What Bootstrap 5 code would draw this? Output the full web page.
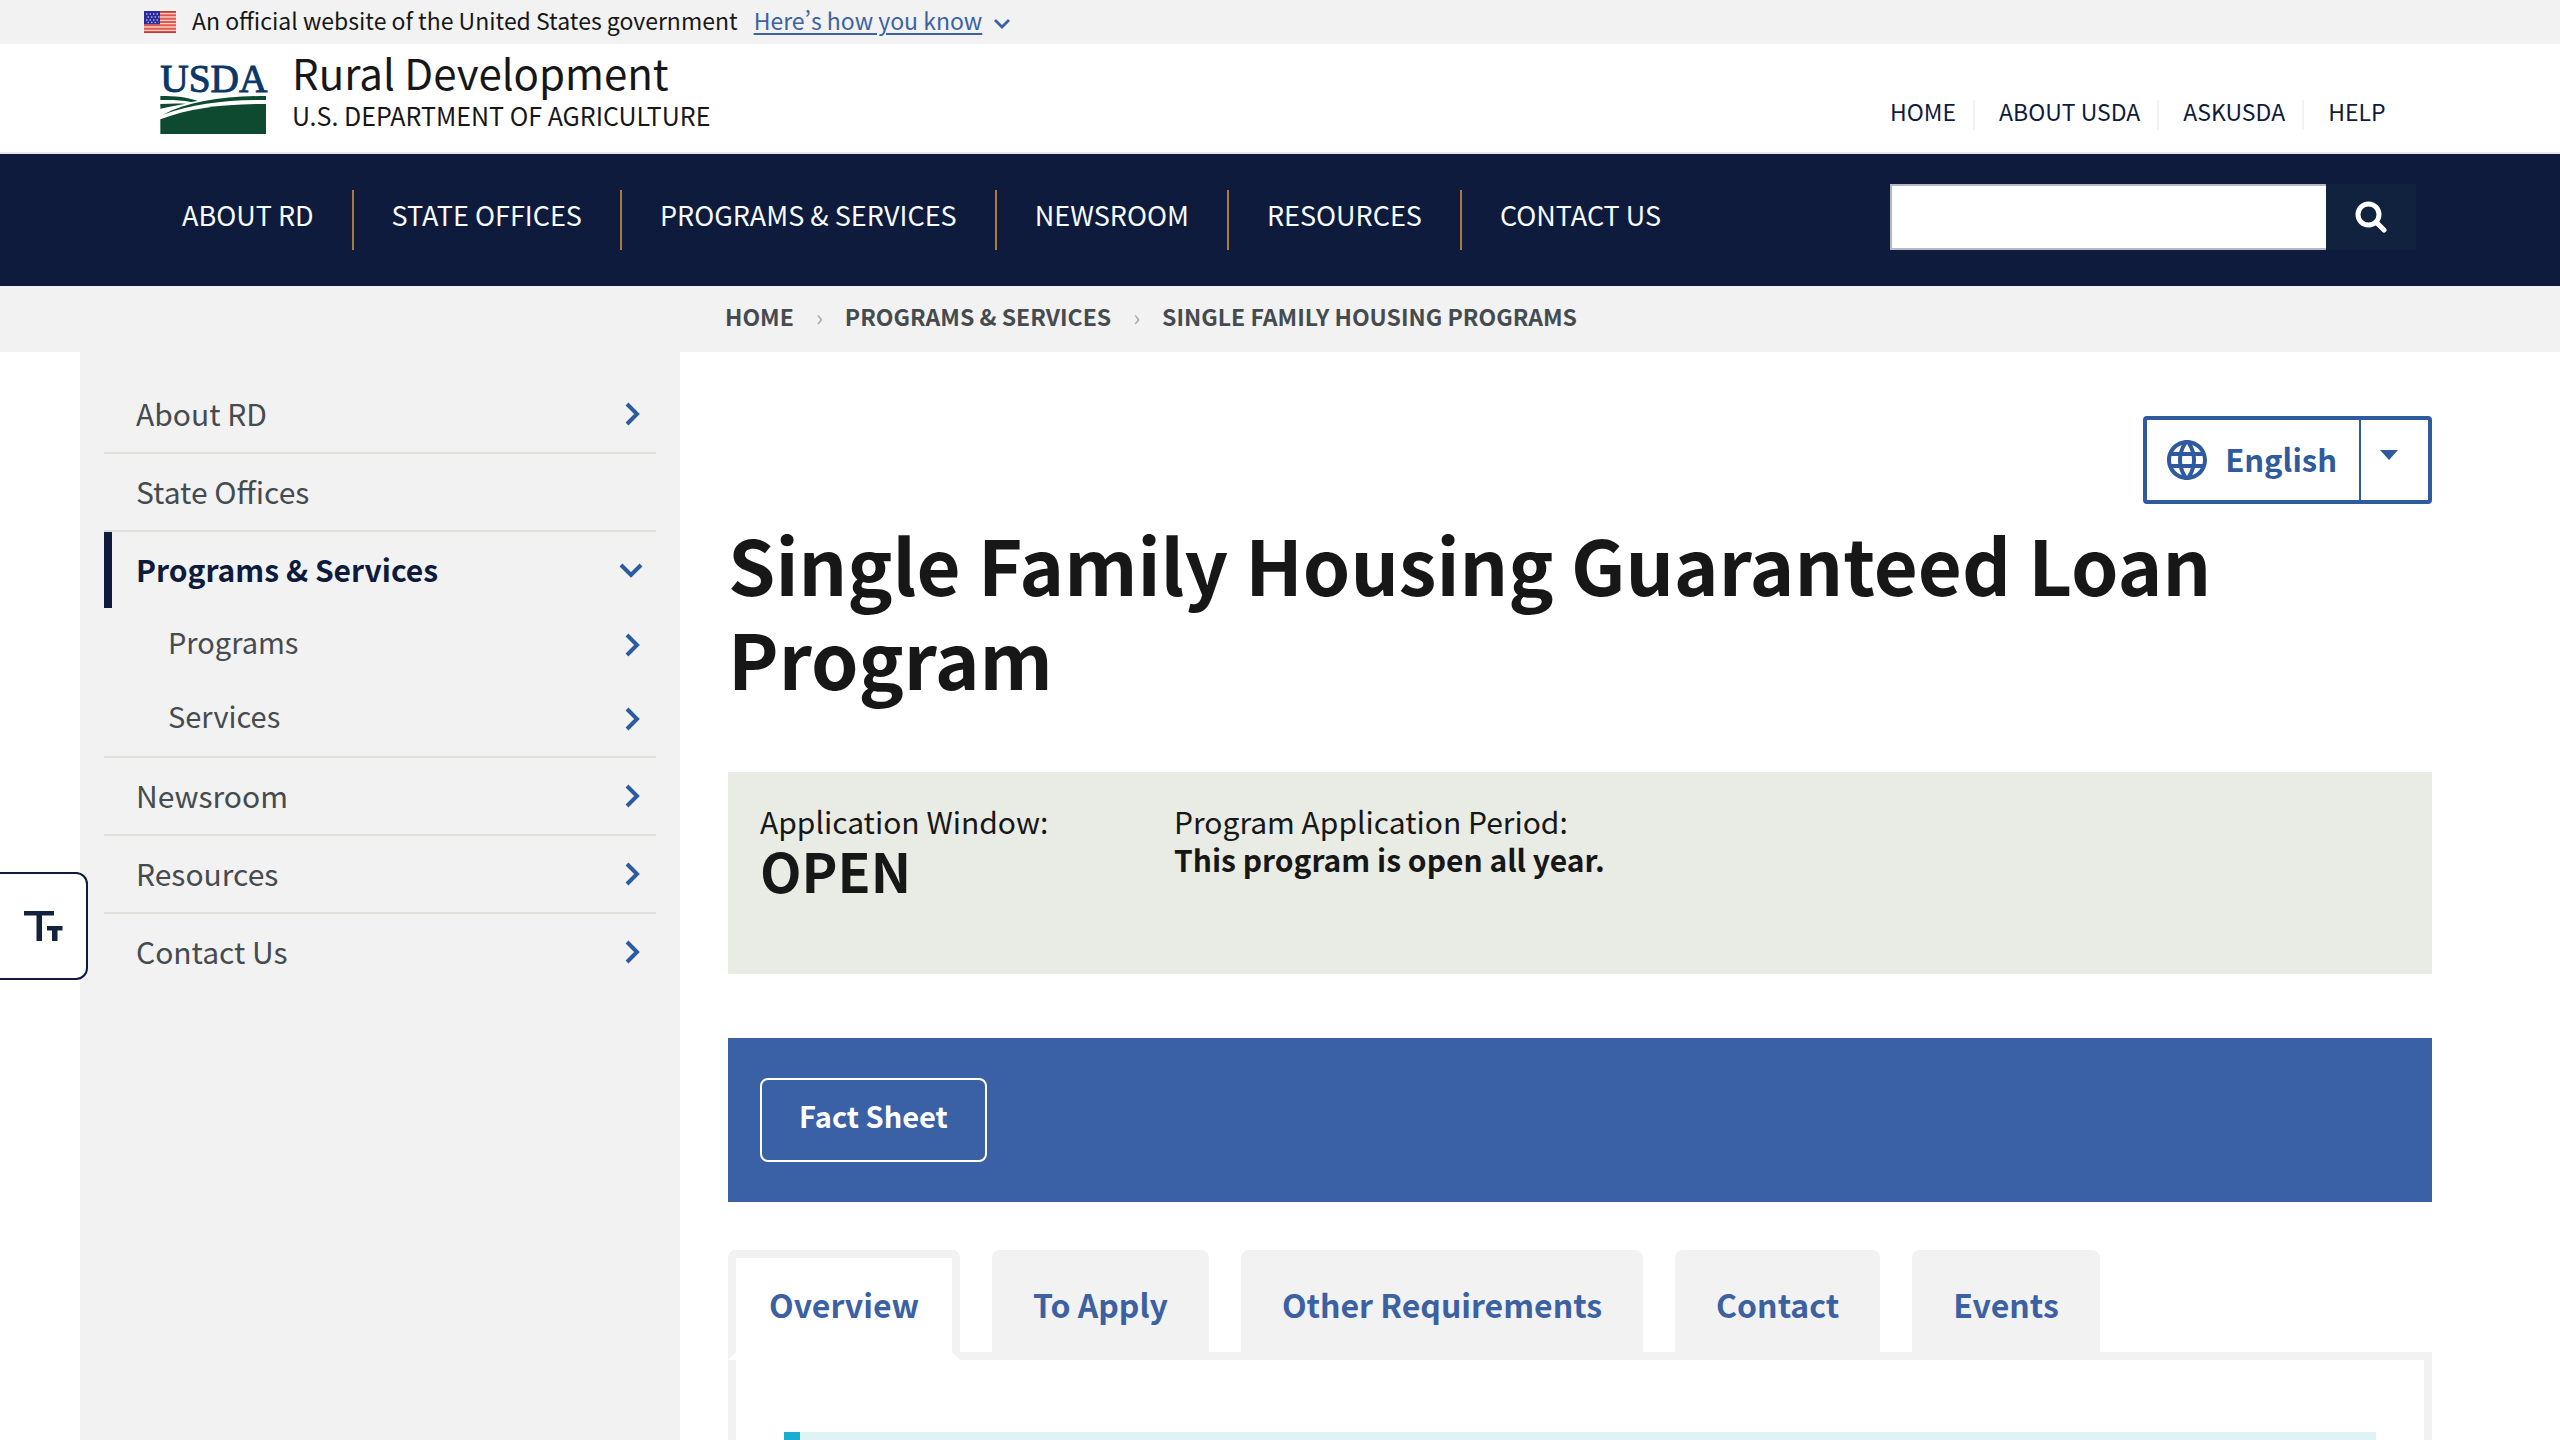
<!doctype html>
<html lang="en">
<head>
<meta charset="utf-8">
<meta name="viewport" content="width=device-width, initial-scale=1">
<title>Single Family Housing Guaranteed Loan Program | Rural Development</title>
<link rel="stylesheet" href="https://cdn.jsdelivr.net/npm/bootstrap@5.3.0/dist/css/bootstrap.min.css">
<style>
  :root { --ink:#171717; --navy:#0f1b3c; --blue:#2f5a9d; --mist:#f2f2f2; --slate:#454b4f; }
  body { font-family:"Noto Sans CJK SC","Noto Sans",sans-serif; color:var(--ink); background:#fff; }
  a { text-decoration:none; color:inherit; }
  svg { display:block; flex:none; }
  .site-width { width:100%; max-width:2400px; margin-inline:auto; }
  .site-pad { padding-inline:64px; }

  .gov-banner { background:var(--mist); font-size:23px; line-height:40px; padding-bottom:4px; }
  .gov-link { color:#3b63a3; text-decoration:underline; text-underline-offset:3px; font-feature-settings:"pwid"; }

  .site-head { height:110px; border-bottom:2px solid #e8e8ec; }
  .brand-logo { overflow:visible; }
  .brand-name { font-size:42px; line-height:56px; }
  .brand-dept { font-size:25px; line-height:30px; }
  .tool-col { width:526px; }
  .quick-link { font-size:23px; line-height:22px; color:var(--navy); }
  .quick-link a { display:block; padding-bottom:8px; }
  .quick-link + .quick-link { border-left:2px solid #f3f3f5; padding-left:24px; margin-left:17px; }

  .main-nav { background:var(--navy); height:132px; }
  .main-menu { padding-top:36px; }
  .main-search { padding-top:30px; }
  .main-link { font-size:27px; line-height:50px; color:#f6fbfc; padding:0 38px 10px; }
  .main-item + .main-item .main-link { border-left:2px solid #a87a3c; }
  .search-box { height:66px; border:2px solid #b4b8c2; border-right:0; border-radius:0; background:#fff; font-size:27px; }
  .search-go { width:90px; height:66px; border:0; border-radius:0; background:#11223f; }

  .crumb-band { background:var(--mist); font-size:23px; line-height:60px; padding-bottom:6px; font-weight:700; color:var(--slate); }
  .crumb-list { margin:0 0 0 25%; padding-left:45px; }
  .crumb-sep { font-weight:400; color:#a6a9ac; padding-inline:22px; }

  .side-col { width:25%; background:var(--mist); padding:24px 24px 0; }
  .side-col li + li { border-top:2px solid #dfe0db; }
  .side-link { display:flex; align-items:center; justify-content:space-between; height:76px; padding:0 13px 0 32px; font-size:30px; line-height:74px; color:var(--slate); }
  .side-link span { padding-bottom:2px; }
  .side-link.is-current { border-left:8px solid var(--navy); padding-left:24px; color:var(--navy); font-weight:700; }
  .side-col .side-sub li { border:0; }
  .side-sub .side-link { height:74px; padding-left:64px; font-size:29px; line-height:66px; }
  .side-sub .side-link span { padding-bottom:8px; }

  .page-col { padding:64px 48px 0; }
  .lang-btn { height:88px; padding:0; border:4px solid var(--blue); border-radius:4px; background:#fff; color:var(--blue); font-size:31px; line-height:74px; font-weight:700; }
  .lang-name { padding:0 22px 0 20px; gap:18px; }
  .lang-name span { padding-bottom:2px; }
  .lang-caret { width:69px; border-left:2px solid var(--blue); padding:30px 0 0 19px; }
  .page-title { font-size:76px; line-height:94px; font-weight:700; margin:12px 0 68px; }
  .status-box { background:#e9ece5; padding:30px 32px 74px; font-size:30px; line-height:38px; margin-bottom:64px; }
  .status-word { font-size:54px; line-height:60px; font-weight:700; }
  .action-box { background:#3a60a5; padding:40px 32px; margin-bottom:48px; }
  .action-btn { display:inline-block; border:2px solid #fff; border-radius:8px; color:#fff; font-size:29px; line-height:70px; font-weight:700; padding:0 37px 10px; vertical-align:top; }

  .info-tabs { gap:32px; position:relative; z-index:1; margin-bottom:-8px; }
  .info-tab { border:8px solid var(--mist); border-radius:8px 8px 0 0; background:var(--mist); color:#3b61a2; font-size:32px; line-height:92px; font-weight:700; padding:0 33px 2px; }
  .info-tab.active { background:#fff; border-bottom-color:#fff; }
  .info-panel { border:8px solid var(--mist); border-bottom:0; padding:72px 48px 0; }
  .info-note { border-left:16px solid #17aed3; background:#e0f3f4; min-height:8px; }

  .text-size { left:0; top:872px; width:88px; height:108px; padding:0 0 0 24px; background:#fff; border:2px solid var(--navy); border-left:0; border-radius:0 12px 12px 0; z-index:5; }
</style>
</head>
<body class="d-flex flex-column min-vh-100">

<svg class="d-none" aria-hidden="true">
  <symbol id="chev" viewBox="-4 0 22 24"><path d="M2 2l10 10L2 22" fill="none" stroke="#2c5c9f" stroke-width="4"/></symbol>
</svg>

<div class="gov-banner">
  <div class="site-width site-pad d-flex align-items-center">
    <svg class="me-3 mt-1" width="32" height="22" viewBox="0 0 32 22" role="img" aria-label="U.S. flag">
      <path fill="#f9cfc8" d="M0 0h32v22H0z"/>
      <path d="M0 1h32M0 4.300h32M0 7.700h32M0 11h32M0 14.300h32M0 17.700h32M0 21h32" stroke="#e0594e" stroke-width="1.900"/>
      <path d="M0 .7h32M0 21.400h32" stroke="#bd3d36" stroke-width="1.200"/>
      <path fill="#2b2a9b" d="M0 0h16v13.300H0z"/>
      <path d="M2 3h13M3.500 6h12M2 9h13M3.500 11.500h11" stroke="#aaa8e8" stroke-width="1.400" stroke-dasharray="1.500 2"/>
    </svg>
    <span>An official website of the United States government</span>
    <a class="gov-link ms-3" href="#">Here’s how you know</a>
    <svg class="ms-2 mt-2" width="24" height="16" viewBox="0 0 24 16" aria-hidden="true"><path d="M5 4l7 7 7-7" fill="none" stroke="#3b63a3" stroke-width="2.800"/></svg>
  </div>
</div>

<header class="site-head">
  <div class="site-width site-pad d-flex justify-content-between">
    <a class="d-flex ps-3" href="#">
      <svg class="brand-logo mt-3 me-4" width="108" height="74" viewBox="92 180 324 222" role="img" aria-label="USDA">
        <text x="93" y="275" font-family="Liberation Serif, serif" font-size="118" fill="#0b3768" stroke="#0b3768" stroke-width="3">USDA</text>
        <g fill="#0d4a30">
          <path d="M93 288c45 0 84 4 112 15l-20 3c-30-6-60-7-92-6z"/>
          <path d="M93 312c28-2 54-2 76-1-28 5-52 10-76 15z"/>
          <path d="M100 344c80-40 180-56 310-56v12c-120-1-220 12-310 44z"/>
          <path d="M93 358c90-34 190-46 317-46v90H93z"/>
        </g>
      </svg>
      <span class="d-flex flex-column">
        <span class="brand-name">Rural Development</span>
        <span class="brand-dept">U.S. DEPARTMENT OF AGRICULTURE</span>
      </span>
    </a>
    <ul class="tool-col list-unstyled d-flex align-self-end mb-1">
      <li class="quick-link"><a href="#">HOME</a></li>
      <li class="quick-link"><a href="#">ABOUT USDA</a></li>
      <li class="quick-link"><a href="#">ASKUSDA</a></li>
      <li class="quick-link"><a href="#">HELP</a></li>
    </ul>
  </div>
</header>

<nav class="main-nav" aria-label="Primary">
  <div class="site-width site-pad d-flex justify-content-between">
    <ul class="main-menu nav">
      <li class="main-item"><a class="main-link d-block" href="#">ABOUT RD</a></li>
      <li class="main-item"><a class="main-link d-block" href="#">STATE OFFICES</a></li>
      <li class="main-item"><a class="main-link d-block" href="#">PROGRAMS &amp; SERVICES</a></li>
      <li class="main-item"><a class="main-link d-block" href="#">NEWSROOM</a></li>
      <li class="main-item"><a class="main-link d-block" href="#">RESOURCES</a></li>
      <li class="main-item"><a class="main-link d-block" href="#">CONTACT US</a></li>
    </ul>
    <form class="main-search tool-col d-flex" role="search">
      <input class="search-box form-control" type="search" aria-label="Search">
      <button class="search-go btn d-flex flex-shrink-0 align-items-center justify-content-center" type="submit" aria-label="Search">
        <svg width="32" height="32" viewBox="0 0 32 32" fill="none" stroke="#fff" stroke-width="5"><circle cx="13.500" cy="13.500" r="10.500"/><path d="M21.500 21.500l7.500 7.500" stroke-linecap="round"/></svg>
      </button>
    </form>
  </div>
</nav>

<nav class="crumb-band" aria-label="Breadcrumb">
  <div class="site-width">
    <ol class="crumb-list list-unstyled d-flex">
      <li><a href="#">HOME</a><span class="crumb-sep">›</span></li>
      <li><a href="#">PROGRAMS &amp; SERVICES</a><span class="crumb-sep">›</span></li>
      <li><a href="#">SINGLE FAMILY HOUSING PROGRAMS</a></li>
    </ol>
  </div>
</nav>

<div class="site-width d-flex flex-grow-1">
  <aside class="side-col flex-shrink-0">
    <ul class="list-unstyled m-0">
      <li><a class="side-link" href="#"><span>About RD</span><svg width="22" height="24"><use href="#chev"/></svg></a></li>
      <li><a class="side-link" href="#"><span>State Offices</span></a></li>
      <li>
        <a class="side-link is-current" href="#"><span>Programs &amp; Services</span><svg width="24" height="16" viewBox="0 0 24 16"><path d="M2 3l10 10L22 3" fill="none" stroke="#2c5c9f" stroke-width="4"/></svg></a>
        <ul class="side-sub list-unstyled m-0">
          <li><a class="side-link" href="#"><span>Programs</span><svg width="22" height="24"><use href="#chev"/></svg></a></li>
          <li><a class="side-link" href="#"><span>Services</span><svg width="22" height="24"><use href="#chev"/></svg></a></li>
        </ul>
      </li>
      <li><a class="side-link" href="#"><span>Newsroom</span><svg width="22" height="24"><use href="#chev"/></svg></a></li>
      <li><a class="side-link" href="#"><span>Resources</span><svg width="22" height="24"><use href="#chev"/></svg></a></li>
      <li><a class="side-link" href="#"><span>Contact Us</span><svg width="22" height="24"><use href="#chev"/></svg></a></li>
    </ul>
  </aside>

  <main class="page-col flex-grow-1 d-flex flex-column">
    <button class="lang-btn btn d-flex align-self-end align-items-stretch" type="button" aria-haspopup="true">
      <span class="lang-name d-flex align-items-center">
        <svg width="40" height="40" viewBox="2 2 20 20" fill="#2f5a9d" aria-hidden="true"><path d="M11.990 2C6.470 2 2 6.480 2 12s4.470 10 9.990 10C17.520 22 22 17.520 22 12S17.520 2 11.990 2zm6.930 6h-2.950a15.650 15.650 0 0 0-1.380-3.560A8.030 8.030 0 0 1 18.920 8zM12 4.040c.830 1.200 1.480 2.530 1.910 3.960h-3.820c.430-1.430 1.080-2.760 1.910-3.960zM4.260 14C4.100 13.360 4 12.690 4 12s.1-1.360.260-2h3.380c-.080.660-.140 1.320-.140 2s.060 1.340.140 2H4.260zm.820 2h2.950c.320 1.250.780 2.450 1.380 3.560A7.987 7.987 0 0 1 5.080 16zm2.950-8H5.080a7.987 7.987 0 0 1 4.330-3.560A15.650 15.650 0 0 0 8.030 8zM12 19.960c-.830-1.200-1.480-2.530-1.910-3.960h3.820c-.430 1.430-1.080 2.760-1.910 3.960zM14.340 14H9.660c-.090-.660-.160-1.320-.160-2s.070-1.350.160-2h4.680c.090.650.160 1.320.160 2s-.070 1.340-.160 2zm.250 5.560c.6-1.110 1.060-2.310 1.380-3.560h2.950a8.030 8.030 0 0 1-4.330 3.560zM16.360 14c.080-.660.140-1.320.140-2s-.060-1.340-.140-2h3.380c.160.640.260 1.310.260 2s-.1 1.360-.260 2h-3.380z"/></svg>
        <span>English</span>
      </span>
      <span class="lang-caret"><svg width="18" height="10" viewBox="0 0 18 10"><path d="M0 0h18l-9 10z" fill="#2f5a9d"/></svg></span>
    </button>

    <h1 class="page-title">Single Family Housing Guaranteed Loan Program</h1>

    <section class="status-box">
      <div class="row gx-3">
        <div class="col-3"><div>Application Window:</div><div class="status-word">OPEN</div></div>
        <div class="col"><div>Program Application Period:</div><strong>This program is open all year.</strong></div>
      </div>
    </section>

    <section class="action-box"><a class="action-btn" href="#">Fact Sheet</a></section>

    <div class="info-tabs d-flex" role="tablist">
      <button class="info-tab active" type="button" role="tab" aria-selected="true">Overview</button>
      <button class="info-tab" type="button" role="tab" aria-selected="false">To Apply</button>
      <button class="info-tab" type="button" role="tab" aria-selected="false">Other Requirements</button>
      <button class="info-tab" type="button" role="tab" aria-selected="false">Contact</button>
      <button class="info-tab" type="button" role="tab" aria-selected="false">Events</button>
    </div>
    <section class="info-panel flex-grow-1 d-flex flex-column" role="tabpanel">
      <div class="info-note flex-grow-1"></div>
    </section>
  </main>
</div>

<button class="text-size position-fixed" type="button" aria-label="Change text size">
  <svg width="40" height="30" viewBox="0 0 40 30" fill="#14213f"><path d="M0 0h30v4.600H18V30h-5.500V4.600H0zM23 15h15.500v4.600h-5V30H28V19.600h-5z"/></svg>
</button>

<script src="https://cdn.jsdelivr.net/npm/bootstrap@5.3.0/dist/js/bootstrap.bundle.min.js"></script>
</body>
</html>
